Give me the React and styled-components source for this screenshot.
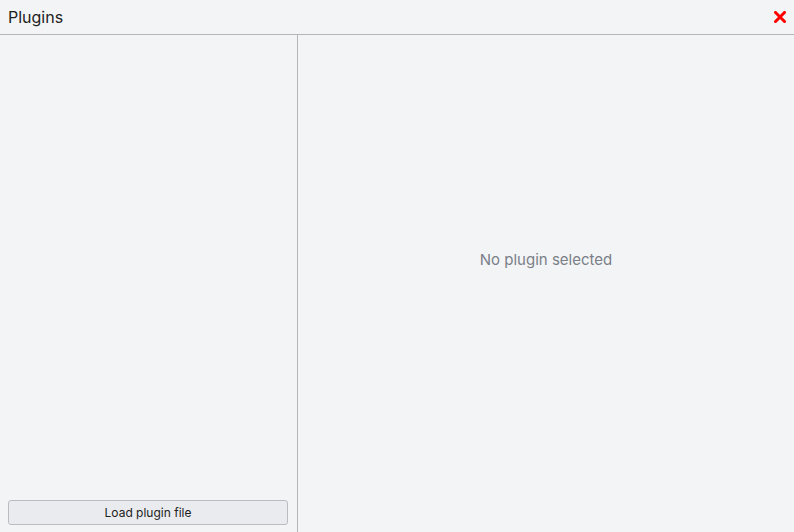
import React from 'react'
import styled, { createGlobalStyle } from 'styled-components'

const Global = createGlobalStyle`
  html, body {
    margin: 0;
    padding: 0;
    background: #f3f4f6;
  }
  #root {
    height: 100vh;
  }
`

function App() {
  return (
    <Main>
      <Global />
      <Header>
        <Title>Plugins</Title>
        <Close aria-label="close">
          <svg width="12" height="12" viewBox="0 0 12 12">
            <path d="M1.5 1.5 L10.5 10.5 M10.5 1.5 L1.5 10.5" stroke="#ff0000" strokeWidth="3" strokeLinecap="square" />
          </svg>
        </Close>
      </Header>
      <Body>
        <Sidebar>
          <List />
          <LoadButton>Load plugin file</LoadButton>
        </Sidebar>
        <Detail>
          <Empty>No plugin selected</Empty>
        </Detail>
      </Body>
    </Main>
  )
}

const Main = styled.div`
  height: 100%;
  display: flex;
  flex-direction: column;
  background: #f3f4f6;
  font-family: Inter, "Noto Sans", sans-serif;
`

const Header = styled.div`
  height: 34px;
  flex-shrink: 0;
  display: flex;
  align-items: center;
  justify-content: space-between;
  padding: 0 8px 0 8px;
  border-bottom: 1px solid #b4b6b9;
`

const Title = styled.div`
  font-size: 16px;
  color: #222;
  margin-top: -1px;
`

const Close = styled.button`
  border: none;
  background: none;
  padding: 0;
  display: flex;
  cursor: pointer;
`

const Body = styled.div`
  flex: 1;
  display: flex;
  min-height: 0;
`

const Sidebar = styled.div`
  width: 298px;
  border-right: 1px solid #b4b6b9;
  display: flex;
  flex-direction: column;
  padding: 0 9px 7px 8px;
  box-sizing: border-box;
`

const List = styled.div`
  flex: 1;
`

const LoadButton = styled.button`
  height: 25px;
  border: 1px solid #b9bcc0;
  border-radius: 3px;
  background: #e9ebee;
  font-family: Inter, "Noto Sans", sans-serif;
  font-size: 12px;
  color: #222;
`

const Detail = styled.div`
  flex: 1;
  display: flex;
  justify-content: center;
  padding-top: 215px;
`

const Empty = styled.div`
  font-size: 15px;
  color: #7a7f87;
`

export default App
